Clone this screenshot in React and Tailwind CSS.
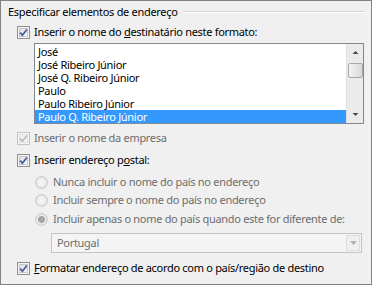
import React from "react";

/* Caixa de seleção estilo Windows 7 */
function Check({ checked = true, disabled = false }) {
  const border = disabled ? "#c3c3c3" : "#8e8f8f";
  const mark = disabled ? "#b8b8b8" : "#41589b";
  return (
    <svg width="13" height="13" viewBox="0 0 13 13" className="shrink-0">
      <defs>
        <linearGradient id={disabled ? "cbd" : "cb"} x1="0" y1="0" x2="1" y2="1">
          <stop offset="0" stopColor={disabled ? "#ececec" : "#dcdcdc"} />
          <stop offset="1" stopColor="#fbfbfb" />
        </linearGradient>
      </defs>
      <rect x="0.5" y="0.5" width="12" height="12" fill="#f6f6f6" stroke={border} />
      <rect x="2.5" y="2.5" width="8" height="8" fill={`url(#${disabled ? "cbd" : "cb"})`} stroke={disabled ? "#dedede" : "#c8c8c8"} />
      {checked && (
        <path d="M3.2 6.6 L5.4 9.2 L9.9 3.4" fill="none" stroke={mark} strokeWidth="1.7" />
      )}
    </svg>
  );
}

function Radio({ selected = false }) {
  return (
    <svg width="13" height="13" viewBox="0 0 13 13" className="shrink-0">
      <defs>
        <radialGradient id="rg" cx="0.5" cy="0.5" r="0.6">
          <stop offset="0" stopColor="#f8f8f8" />
          <stop offset="1" stopColor="#e4e4e4" />
        </radialGradient>
      </defs>
      <circle cx="6.5" cy="6.5" r="5.8" fill="url(#rg)" stroke="#c2c2c2" />
      {selected && <circle cx="6.5" cy="6.5" r="3" fill="#a8a8a8" stroke="#8c8c8c" strokeWidth="0.8" />}
    </svg>
  );
}

const nomes = [
  "José",
  "José Ribeiro Júnior",
  "José Q. Ribeiro Júnior",
  "Paulo",
  "Paulo Ribeiro Júnior",
  "Paulo Q. Ribeiro Júnior",
];

export default function App() {
  return (
    <div className="w-[372px] h-[285px] bg-[#f0f0f0] border border-[#828282] overflow-hidden text-[11px] leading-[16px] tracking-[-0.3px] text-black font-['Noto_Sans','Open_Sans',sans-serif]">
      {/* Título do grupo */}
      <div className="flex items-center pl-[7px] pr-[6px] pt-[3px]">
        <span>Especificar elementos de endereço</span>
        <div className="flex-1 ml-[5px] border-t border-[#d5d5d5] border-b-white border-b" />
      </div>

      {/* Nome do destinatário */}
      <div className="flex items-center gap-[4px] pl-[16px] mt-[4px]">
        <Check />
        <span>
          Inserir o nome do <span className="underline">d</span>estinatário neste formato:
        </span>
      </div>

      <div className="ml-[33px] mt-[3px] w-[330px] h-[81px] border border-[#828790] bg-white flex">
        <div className="flex-1 leading-[13px] pt-[1px]">
          {nomes.map((n, i) => (
            <div
              key={n}
              className={`h-[13px] pl-[3px] ${i === nomes.length - 1 ? "bg-[#3399ff] text-white" : ""}`}
            >
              {n}
            </div>
          ))}
        </div>
        {/* Barra de rolagem */}
        <div className="w-[17px] bg-[#ebebeb] border-l border-[#e0e0e0] flex flex-col items-center">
          <svg width="17" height="17" viewBox="0 0 17 17">
            <path d="M5.5 10 L8.5 7 L11.5 10 Z" fill="#4d4d4d" />
          </svg>
          <div className="w-[15px] h-[15px] mt-[2px] rounded-[2px] border border-[#a8a8a8] bg-gradient-to-r from-[#f4f4f4] to-[#d8d8d8]" />
          <div className="flex-1" />
          <svg width="17" height="17" viewBox="0 0 17 17">
            <path d="M5.5 7 L8.5 10 L11.5 7 Z" fill="#4d4d4d" />
          </svg>
        </div>
      </div>

      {/* Nome da empresa (desativado) */}
      <div className="flex items-center gap-[4px] pl-[16px] mt-[6px] text-[#6d6d6d]">
        <Check disabled />
        <span>Inserir o nome da empresa</span>
      </div>

      {/* Endereço postal */}
      <div className="flex items-center gap-[4px] pl-[16px] mt-[6px]">
        <Check />
        <span>
          Inserir endereço p<span className="underline">o</span>stal:
        </span>
      </div>

      <div className="pl-[34px] mt-[6px] flex flex-col gap-[2px] text-[#6d6d6d]">
        <div className="flex items-center gap-[5px] h-[16px]">
          <Radio />
          <span>Nunca incluir o nome do país no endereço</span>
        </div>
        <div className="flex items-center gap-[5px] h-[16px]">
          <Radio />
          <span>Incluir sempre o nome do país no endereço</span>
        </div>
        <div className="flex items-center gap-[5px] h-[16px] mt-[1px]">
          <Radio selected />
          <span className="whitespace-nowrap">Incluir apenas o nome do país quando este for diferente de:</span>
        </div>
      </div>

      {/* País */}
      <div className="ml-[50px] mt-[6px] w-[311px] h-[20px] border border-[#c5c5c5] bg-[#f4f4f4] flex items-center text-[#6d6d6d]">
        <span className="flex-1 pl-[5px]">Portugal</span>
        <div className="w-[14px] h-[16px] mr-[1px] border border-[#dcdcdc] bg-[#f0f0f0] flex items-center justify-center">
          <svg width="7" height="4" viewBox="0 0 7 4">
            <path d="M0 0 L7 0 L3.5 4 Z" fill="#b0b0b0" />
          </svg>
        </div>
      </div>

      {/* Formatar */}
      <div className="flex items-center gap-[4px] pl-[16px] mt-[7px]">
        <Check />
        <span>
          <span className="underline">F</span>ormatar endereço de acordo com o país/região de destino
        </span>
      </div>
    </div>
  );
}
